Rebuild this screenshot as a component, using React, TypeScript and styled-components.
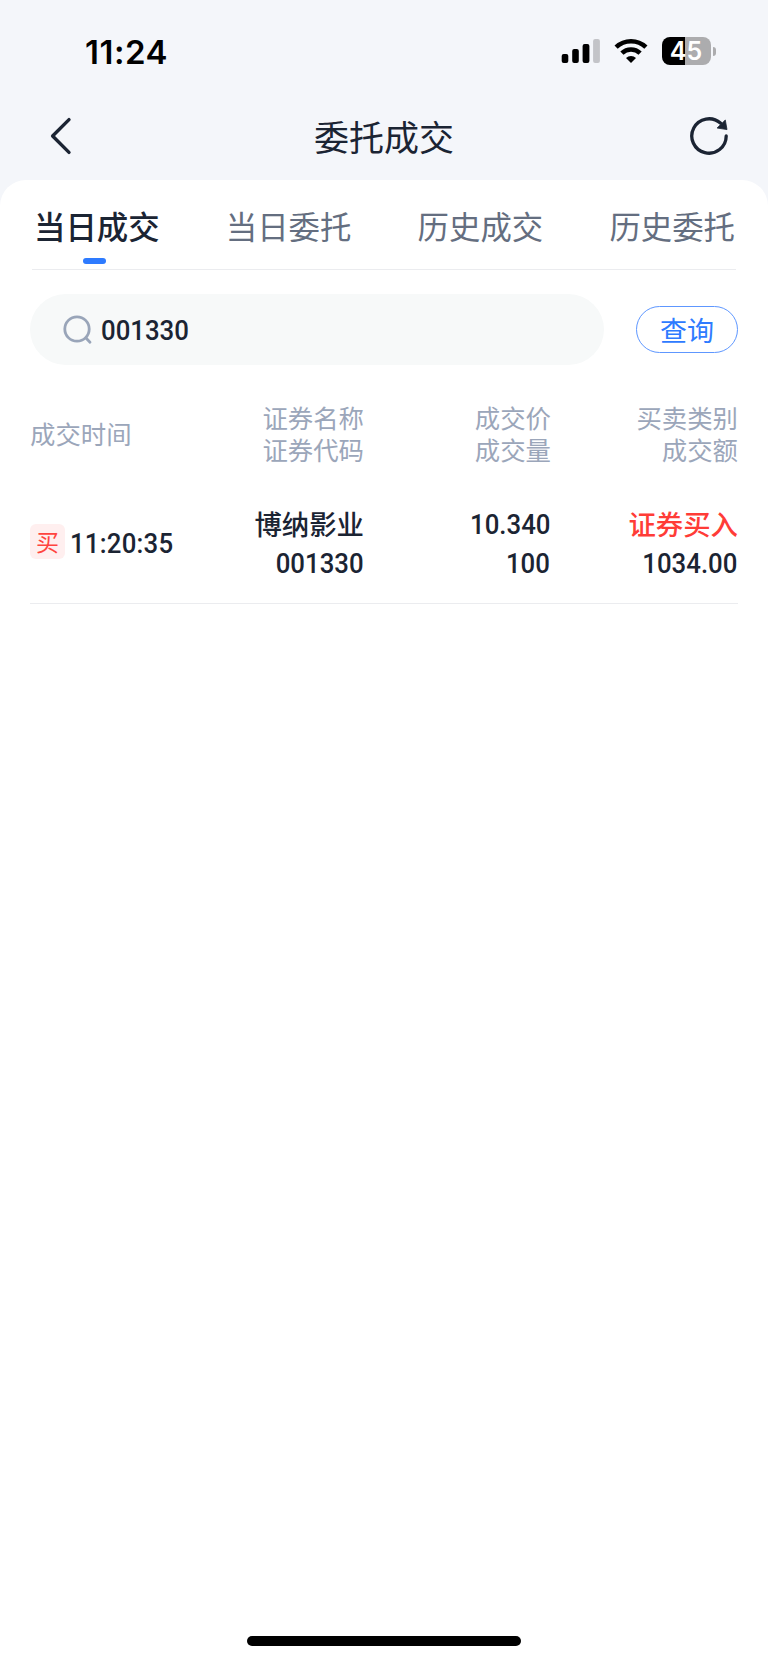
import React, { useState } from 'react'
import styled, { createGlobalStyle } from 'styled-components'

interface Deal {
  id: string
  side: string
  time: string
  name: string
  code: string
  price: string
  volume: string
  category: string
  amount: string
}

const TABS = ['当日成交', '当日委托', '历史成交', '历史委托']

const COLUMNS = [
  ['成交时间'],
  ['证券名称', '证券代码'],
  ['成交价', '成交量'],
  ['买卖类别', '成交额']
]

const DEALS: Deal[] = [
  {
    id: '1',
    side: '买',
    time: '11:20:35',
    name: '博纳影业',
    code: '001330',
    price: '10.340',
    volume: '100',
    category: '证券买入',
    amount: '1034.00'
  }
]

const SignalIcon: React.FC = () => (
  <svg width="40" height="26" viewBox="0 0 40 26">
    <rect x="0.7" y="16" width="6.6" height="9" rx="2" />
    <rect x="11.2" y="11" width="6.6" height="14" rx="2" />
    <rect x="21.6" y="6" width="6.8" height="19" rx="2" />
    <rect x="32.1" y="1" width="6.8" height="24" rx="2" fill="#c3c4c8" />
  </svg>
)

const WifiIcon: React.FC = () => (
  <svg width="34" height="26" viewBox="0 0 34 26" fill="none" stroke="#000" strokeWidth="4.6">
    <path d="M2.1 9.2a21.6 21.6 0 0 1 29.8 0" />
    <path d="M7.9 15.2a13.2 13.2 0 0 1 18.2 0" />
    <path d="M17 25l-5-5a7.4 7.4 0 0 1 10 0z" fill="#000" stroke="none" />
  </svg>
)

const BackIcon: React.FC = () => (
  <svg width="24" height="40" viewBox="0 0 24 40" fill="none" stroke="#1b2433" strokeWidth="3.4" strokeLinecap="round" strokeLinejoin="round">
    <path d="M21 3.6 4.6 20l16.4 16.4" />
  </svg>
)

const RefreshIcon: React.FC = () => (
  <svg width="40" height="40" viewBox="0 0 40 40">
    <path d="M37.2 20A17.2 17.2 0 1 1 31.4 7.1" fill="none" stroke="#1b2433" strokeWidth="3.3" strokeLinecap="round" />
    <path d="M36.3 4l1.7 9.6-9.9-1.6z" fill="#1b2433" stroke="#1b2433" strokeWidth="0.8" strokeLinejoin="round" />
  </svg>
)

const SearchIcon: React.FC = () => (
  <svg width="30" height="30" viewBox="0 0 30 30" fill="none" stroke="#99a5b9" strokeWidth="2.8" strokeLinecap="round">
    <circle cx="14" cy="14" r="12.2" />
    <path d="M23.2 23.2l3.8 4" />
  </svg>
)

export default function App() {
  const [activeTab, setActiveTab] = useState(0)
  const [keyword, setKeyword] = useState('001330')

  return (
    <Screen>
      <GlobalStyle />
      <StatusBar>
        <Clock>11:24</Clock>
        <StatusIcons>
          <SignalIcon />
          <WifiIcon />
          <BatteryWrap>
            <Battery>45</Battery>
            <BatteryCap />
          </BatteryWrap>
        </StatusIcons>
      </StatusBar>
      <NavBar>
        <NavButton aria-label="返回"><BackIcon /></NavButton>
        <Title>委托成交</Title>
        <NavButton aria-label="刷新" $end><RefreshIcon /></NavButton>
      </NavBar>
      <Sheet>
        <Tabs>
          {TABS.map((tab, i) => (
            <Tab key={tab} $active={i === activeTab} onClick={() => setActiveTab(i)}>
              {tab}
              {i === activeTab && <Indicator />}
            </Tab>
          ))}
        </Tabs>
        <SearchRow>
          <SearchBox>
            <SearchIcon />
            <SearchInput value={keyword} onChange={(e) => setKeyword(e.target.value)} />
          </SearchBox>
          <QueryButton>查询</QueryButton>
        </SearchRow>
        <HeadRow>
          {COLUMNS.map((lines) => (
            <HeadCell key={lines[0]}>
              {lines.map((line) => <div key={line}>{line}</div>)}
            </HeadCell>
          ))}
        </HeadRow>
        {DEALS.map((deal) => (
          <DealRow key={deal.id}>
            <TimeCell>
              <SideTag>{deal.side}</SideTag>
              <Num $left>{deal.time}</Num>
            </TimeCell>
            <Cell>
              <Name>{deal.name}</Name>
              <Num>{deal.code}</Num>
            </Cell>
            <Cell>
              <Num>{deal.price}</Num>
              <Num>{deal.volume}</Num>
            </Cell>
            <Cell>
              <Name $buy>{deal.category}</Name>
              <Num>{deal.amount}</Num>
            </Cell>
          </DealRow>
        ))}
      </Sheet>
      <HomeArea>
        <HomeBar />
      </HomeArea>
    </Screen>
  )
}

const GlobalStyle = createGlobalStyle`
  * { box-sizing: border-box; }
  body {
    margin: 0;
    background: #f4f6fa;
    font-family: "Liberation Sans", "Noto Sans CJK SC", sans-serif;
    color: #1b2433;
  }
  button { border: none; padding: 0; background: none; font: inherit; color: inherit; cursor: pointer; }
  svg { display: block; flex-shrink: 0; }
`

const Screen = styled.div`
  display: flex;
  flex-direction: column;
  height: 1663px;
  background: #f4f6fa;
`

const StatusBar = styled.div`
  height: 102px;
  display: flex;
  justify-content: space-between;
  align-items: center;
  padding: 0 52px 0 85px;
`

const Clock = styled.div`
  padding-top: 1px;
  font-family: Inter, sans-serif;
  font-size: 33px;
  font-weight: 600;
  letter-spacing: 0.5px;
  color: #000;
`

const StatusIcons = styled.div`
  display: flex;
  align-items: center;
  gap: 13px;
`

const BatteryWrap = styled.div`
  display: flex;
  align-items: center;
  gap: 2px;
  margin-left: 1px;
`

const Battery = styled.div`
  width: 49px;
  height: 28px;
  padding-right: 1px;
  border-radius: 8px;
  background: linear-gradient(90deg, #000 47%, #acacae 47%);
  color: #fff;
  font-family: Inter, sans-serif;
  font-size: 25px;
  font-weight: 600;
  line-height: 29px;
  text-align: center;
`

const BatteryCap = styled.div`
  width: 3px;
  height: 9px;
  border-radius: 0 4px 4px 0;
  background: #acacae;
`

const NavBar = styled.div`
  height: 78px;
  display: flex;
  padding: 0 39px 10px 48px;
`

const NavButton = styled.button<{ $end?: boolean }>`
  width: 140px;
  display: flex;
  align-items: center;
  justify-content: ${({ $end }) => ($end ? 'flex-end' : 'flex-start')};
`

const Title = styled.h1`
  flex: 1;
  margin: 0;
  padding-right: 9px;
  font-size: 35px;
  font-weight: 400;
  line-height: 74px;
  text-align: center;
`

const Sheet = styled.main`
  flex: 1;
  padding: 0 30px;
  border-radius: 26px 26px 0 0;
  background: #fff;
`

const Tabs = styled.div`
  height: 90px;
  display: flex;
  justify-content: space-between;
  margin: 0 2px;
  padding: 0 1px 0 2px;
  border-bottom: 1px solid #ebecef;
`

const Tab = styled.button<{ $active: boolean }>`
  display: flex;
  flex-direction: column;
  padding-top: 26px;
  font-size: 31.4px;
  line-height: 46px;
  font-weight: ${({ $active }) => ($active ? 500 : 400)};
  color: ${({ $active }) => ($active ? '#1b2433' : '#646e80')};
`

const Indicator = styled.span`
  width: 23px;
  height: 6px;
  margin: 6px 0 0 49px;
  border-radius: 3px;
  background: #2e7bff;
`

const SearchRow = styled.div`
  display: flex;
  align-items: center;
  justify-content: space-between;
  padding-top: 24px;
`

const SearchBox = styled.label`
  width: 574px;
  height: 71px;
  display: flex;
  align-items: center;
  gap: 8px;
  padding: 0 24px 0 33px;
  border-radius: 36px;
  background: #f7f9f9;
`

/* Roboto squeezed to the proportions of a DIN face */
const digits = `
  font-family: Roboto, "Noto Sans CJK SC", sans-serif;
  font-size: 28px;
  font-weight: 500;
  transform: scaleX(0.92);
`

const SearchInput = styled.input`
  ${digits}
  transform-origin: left;
  flex: 1;
  min-width: 0;
  padding: 2px 0 0;
  border: none;
  outline: none;
  background: transparent;
  color: #1b2433;
`

const QueryButton = styled.button`
  width: 102px;
  height: 47px;
  border: 1.5px solid #5e97ff;
  border-radius: 24px;
  font-size: 27px;
  line-height: 50px;
  color: #2e7bff;
`

const Row = styled.div`
  display: grid;
  grid-template-columns: 147px 187px 187px 187px;
  align-items: center;
`

const HeadRow = styled(Row)`
  height: 64px;
  margin-top: 38px;
  font-size: 25.4px;
  line-height: 32px;
  color: #9ba6ba;
`

const HeadCell = styled.div`
  text-align: right;
  &:first-child { text-align: left; }
`

const DealRow = styled(Row)`
  height: 137px;
  padding-top: 17px;
  border-bottom: 1px solid #ebecef;
`

const Cell = styled.div`
  display: flex;
  flex-direction: column;
  align-items: flex-end;
`

const TimeCell = styled.div`
  display: flex;
  align-items: center;
  gap: 5px;
`

const SideTag = styled.span`
  width: 35px;
  height: 35px;
  flex-shrink: 0;
  margin-bottom: 4px;
  border-radius: 6px;
  background: #ffefef;
  color: #ff4540;
  font-size: 23px;
  line-height: 38px;
  text-align: center;
`

const Num = styled.span<{ $left?: boolean }>`
  ${digits}
  transform-origin: ${({ $left }) => ($left ? 'left' : 'right')};
  padding-right: ${({ $left }) => ($left ? 0 : '1px')};
  letter-spacing: ${({ $left }) => ($left ? '0.25px' : 0)};
  line-height: 39px;
  white-space: nowrap;
`

const Name = styled.span<{ $buy?: boolean }>`
  height: 39px;
  font-size: 27.4px;
  font-weight: 500;
  line-height: 41px;
  color: ${({ $buy }) => ($buy ? '#ff3c37' : 'inherit')};
`

const HomeArea = styled.div`
  height: 30px;
  display: flex;
  justify-content: center;
  align-items: flex-start;
  padding-top: 3px;
  background: #fff;
`

const HomeBar = styled.div`
  width: 274px;
  height: 10px;
  border-radius: 5px;
  background: #000;
`
